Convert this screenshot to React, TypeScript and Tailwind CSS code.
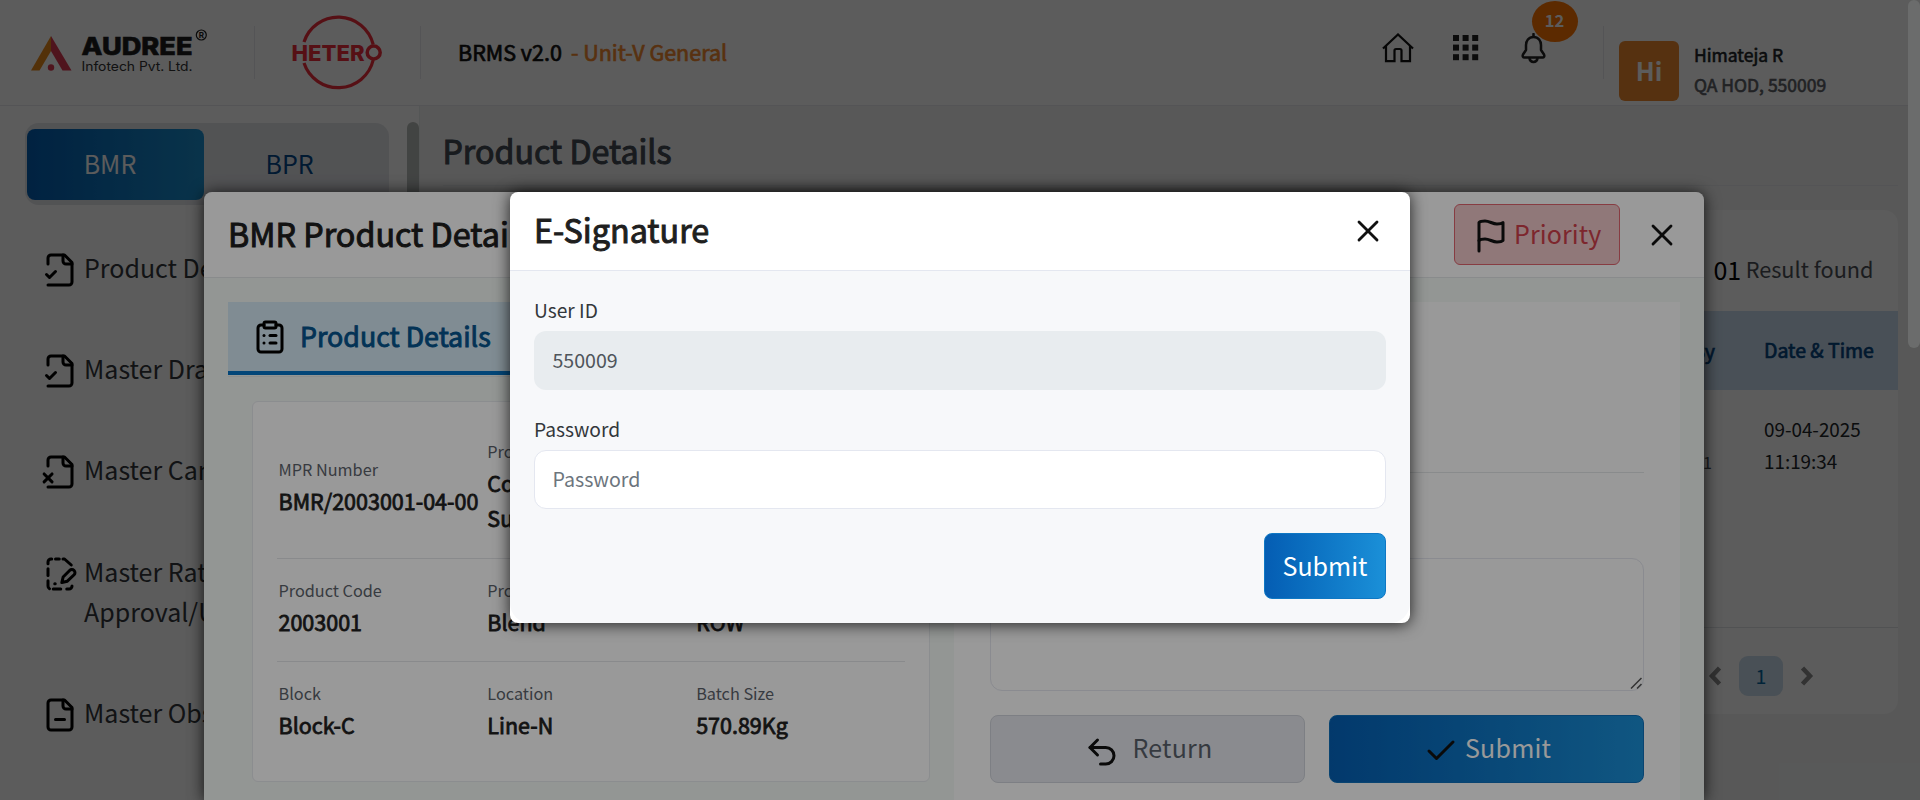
import type { ReactNode } from "react";
import { Check, ClipboardList, Undo2, X } from "lucide-react";

function Glyph({ children, className = "" }: { children: ReactNode; className?: string }) {
  return (
    <svg viewBox="0 0 24 24" fill="none" stroke="currentColor" strokeWidth="2" strokeLinecap="round" strokeLinejoin="round" className={`size-9 shrink-0 overflow-visible ${className}`}>
      {children}
    </svg>
  );
}

const openFile = (
  <>
    <path d="M4 22h14a2 2 0 0 0 2-2V7l-5-5H6a2 2 0 0 0-2 2v4" />
    <path d="M14 2v4a2 2 0 0 0 2 2h4" />
  </>
);

const icons: Record<string, ReactNode> = {
  check: <>{openFile}<path d="m3 15 2 2 4-4" /></>,
  cross: <>{openFile}<path d="m6.700 13.300-5.300 5.300" /><path d="m1.400 13.300 5.300 5.300" /></>,
  edit: (
    <>
      <path d="M4 5.200V4a2 2 0 0 1 2-2h.5" />
      <path d="M9 2h2.500" />
      <path d="M14 2h1l4.500 4" />
      <path d="M4 8.500v4.500" />
      <path d="M4 16.500v3.500a2 2 0 0 0 1 1.800" />
      <path d="M7.500 22h5" />
      <path d="M16.500 22h1.500a2 2 0 0 0 2-2" />
      <path d="M8.500 18.500h.3" />
      <path d="M21.400 9.700a2.100 2.100 0 0 0-3 0l-4.300 4.300-.9 3.700 3.700-.9 4.500-4.300a2 2 0 0 0 0-2.800z" />
    </>
  ),
  minus: (
    <>
      <path d="M15 2H6a2 2 0 0 0-2 2v16a2 2 0 0 0 2 2h12a2 2 0 0 0 2-2V7Z" />
      <path d="M14 2v4a2 2 0 0 0 2 2h4" />
      <path d="M9 15h6" />
    </>
  ),
};

const menu: { icon: string; lines: string[] }[] = [
  { icon: "check", lines: ["Product Details"] },
  { icon: "check", lines: ["Master Drafts"] },
  { icon: "cross", lines: ["Master Cancel"] },
  { icon: "edit", lines: ["Master Ratification", "Approval/Update"] },
  { icon: "minus", lines: ["Master Obsolete"] },
];

function AudreeLogo() {
  return (
    <svg width="180" height="50" viewBox="30 28 180 50" className="shrink-0">
      <path d="M51 36 31 70.500h8.500L51 51z" fill="#e88a1c" />
      <path d="M51 36v15l11.500 19.500H71.500z" fill="#dc3a52" />
      <circle cx="51" cy="67.500" r="3.200" fill="#dc3a52" />
      <text x="81.500" y="55" fontFamily="Inter, sans-serif" fontWeight="800" fontSize="24" textLength="111" lengthAdjust="spacingAndGlyphs" fill="#1d1d1d" stroke="#1d1d1d" strokeWidth=".6">AUDREE</text>
      <text x="81.500" y="70.600" fontFamily="Inter, sans-serif" fontSize="12.800" textLength="111" lengthAdjust="spacingAndGlyphs" fill="#333">Infotech Pvt. Ltd.</text>
      <circle cx="201.300" cy="35" r="5" fill="none" stroke="#1d1d1d" strokeWidth="1.200" />
      <text x="201.300" y="38" textAnchor="middle" fontFamily="Inter, sans-serif" fontWeight="700" fontSize="8" fill="#1d1d1d">R</text>
    </svg>
  );
}

function HeteroLogo() {
  return (
    <svg width="92" height="76" viewBox="291 14.500 92 76" className="shrink-0">
      <path d="M304 42.500A36 36 0 0 1 373.200 45" fill="none" stroke="#f0303c" strokeWidth="3.200" />
      <path d="M304 63.500A36 36 0 0 0 373.200 60.500" fill="none" stroke="#f0303c" strokeWidth="3.200" />
      <text x="291.500" y="61" fontFamily="Inter, sans-serif" fontWeight="800" fontSize="21" textLength="73" lengthAdjust="spacingAndGlyphs" fill="#f0303c">HETER</text>
      <circle cx="373.700" cy="53" r="6.500" fill="none" stroke="#f0303c" strokeWidth="3.500" />
    </svg>
  );
}

function TopBar() {
  return (
    <header className="flex h-[106px] shrink-0 border-b border-[#e9ecef] bg-white pl-[30px]">
      <div className="pt-[28px]"><AudreeLogo /></div>
      <div className="ml-[44px] mt-[26px] h-[53px] w-px bg-[#e9ecef]" />
      <div className="ml-[36px] pt-[14px]"><HeteroLogo /></div>
      <div className="ml-[37px] mt-[26px] h-[53px] w-px bg-[#e9ecef]" />
      <div className="ml-[37px] mt-[32px] flex gap-[9px] whitespace-nowrap text-[21.500px] leading-[40px] [-webkit-text-stroke:0.700px_currentColor]">
        <span className="text-[#111]">BRMS v2.0</span>
        <span className="text-[#f58a2e]">- Unit-V General</span>
      </div>
      <div className="ml-auto flex w-[538px] shrink-0">
        <svg width="32" height="30" viewBox="0 0 32 30" fill="none" stroke="#111" strokeWidth="2.200" className="mt-[33px] shrink-0">
          <path d="M1 15.500 16 1.500l15 14" />
          <path d="M4 13v15.200h8.500V17.500q0-1.500 1.500-1.500h4q1.500 0 1.500 1.500v10.700H28V13" />
        </svg>
        <svg width="26" height="26" viewBox="0 0 26 26" fill="#222" className="ml-[39px] mt-[35px] shrink-0">
          {[0, 9.600, 19.200].map((y) => [0, 9.600, 19.200].map((x) => <rect key={`${x}-${y}`} x={x} y={y} width="6" height="6" />))}
        </svg>
        <div className="relative ml-[41.500px] mt-[33px] h-[32px] w-[25px] shrink-0">
          <svg width="25" height="31" viewBox="0 0 25 31" fill="none" stroke="#222" strokeWidth="2.500" strokeLinecap="round" strokeLinejoin="round">
            <path d="M12.500 1v2.500" />
            <path d="M12.500 4C7.500 4 5 8 5 12v5l-3 4.500c-.8 1.500 0 3 1.500 3h18c1.500 0 2.300-1.500 1.500-3L20 17v-5c0-4-2.500-8-7.500-8z" />
            <path d="M8.500 25.500c.8 4.500 7.200 4.500 8 0" />
          </svg>
          <span className="absolute left-[11px] top-[-32px] flex h-[41px] w-[46px] items-center justify-center rounded-[50%] bg-[#ff7500] pb-[3px] text-[16.500px] font-bold leading-none text-white">12</span>
        </div>
        <div className="ml-[57.500px] mt-[26px] h-[53px] w-px bg-[#e9ecef]" />
        <div className="ml-[15px] mt-[41px] flex h-[60px] w-[60px] shrink-0 items-center justify-center rounded-[6px] bg-[#f0892f] text-[25px] font-bold text-white">Hi</div>
        <div className="ml-[15px] mt-[40px] whitespace-nowrap text-[17.500px] leading-[30.300px] [-webkit-text-stroke:0.600px_currentColor]">
          <div className="text-[#212529]">Himateja R</div>
          <div className="text-[#5c6066]">QA HOD, 550009</div>
        </div>
      </div>
    </header>
  );
}

function SideBar() {
  return (
    <aside className="flex w-[420px] shrink-0 border-r border-[#eceef0] bg-white">
      <div className="flex w-[407px] flex-col pl-[25px] pt-[17px]">
        <div className="flex h-[82px] w-[364px] shrink-0 rounded-[14px] bg-[#e4e6eb] px-[2px] py-[6px] text-[25px]">
          <div className="flex h-[71px] w-[177px] items-center justify-center rounded-[8px] bg-linear-to-r from-[#0560b5] to-[#1b90d0] pb-[1px] pr-[11px] text-white">BMR</div>
          <div className="flex h-[71px] flex-1 items-center pb-[1px] pl-[61.500px] text-[#064a8c]">BPR</div>
        </div>
        <nav className="ml-[17px] mt-[42px] flex flex-col gap-[61.200px]">
          {menu.map((m) => (
            <div key={m.lines[0]} className="flex items-start gap-[6px]">
              <div className="h-[40px] shrink-0 pt-[5px]"><Glyph className="-mb-1 text-black">{icons[m.icon]}</Glyph></div>
              <div className="whitespace-nowrap text-[25px] leading-[40px] text-[#33373b]">
                {m.lines.map((l) => <div key={l}>{l}</div>)}
              </div>
            </div>
          ))}
        </nav>
      </div>
      <div className="mt-[16px] flex-1 rounded-t-[6px] bg-[#babebc]" />
    </aside>
  );
}

function Chevron({ flip }: { flip?: boolean }) {
  return (
    <svg width="14" height="20" viewBox="0 0 14 20" fill="none" stroke="#8d8d8d" strokeWidth="4.500">
      <path d={flip ? "M2.500 2 10 10l-7.500 8" : "M11.500 2 4 10l7.500 8"} />
    </svg>
  );
}

function ProductList() {
  return (
    <main className="flex flex-1 flex-col bg-[#f5f6f6] pl-[22.500px] pr-[22px]">
      <h1 className="flex h-[80px] shrink-0 items-center border-b border-[#e9ecef] pt-[9px] text-[32.200px] text-[#454b55] [-webkit-text-stroke:1px_currentColor]">Product Details</h1>
      <section className="mt-[24px] flex h-[504px] flex-col overflow-hidden rounded-[14px] bg-white">
        <div className="flex h-[101px] items-center justify-end gap-[4.500px] pr-[24.500px] pt-[17px]">
          <span className="text-[25px] leading-[36px] text-black">01</span>
          <span className="text-[21.700px] text-[#4c5157]">Result found</span>
        </div>
        <div className="flex h-[79px] items-center justify-end bg-[#cbe0f2] pr-[25px] text-[19.500px] text-[#064683] [-webkit-text-stroke:0.700px_currentColor]">
          <span className="w-[160px] pr-[49px] text-right">Initiated By</span>
          <span className="w-[109px] whitespace-nowrap pb-[1px]">Date &amp; Time</span>
        </div>
        <div className="flex h-[238px] justify-end border-b border-[#e2e5e8] pr-[25px] pt-[22.500px] text-[18.850px] leading-[32px] text-[#212529]">
          <span className="mt-[33px] pr-[52px] text-[16px] text-[#4c5157]">550001</span>
          <span className="w-[109px]">09-04-2025<br />11:19:34</span>
        </div>
        <div className="ml-auto mr-[84px] mt-[28px] flex items-center gap-[17px]">
          <Chevron />
          <div className="flex h-[40px] w-[44px] items-center justify-center rounded-[9px] bg-[#cbdeee] pb-[1px] text-[19.600px] text-[#06669f]">1</div>
          <Chevron flip />
        </div>
      </section>
    </main>
  );
}

const rows: { label: string; value: string[] }[][] = [
  [
    { label: "MPR Number", value: ["BMR/2003001-04-00"] },
    { label: "Product Name", value: ["Coated", "Sustained"] },
    { label: "Dosage", value: ["Tablet"] },
  ],
  [
    { label: "Product Code", value: ["2003001"] },
    { label: "Product Stage", value: ["Blend"] },
    { label: "Market", value: ["ROW"] },
  ],
  [
    { label: "Block", value: ["Block-C"] },
    { label: "Location", value: ["Line-N"] },
    { label: "Batch Size", value: ["570.89Kg"] },
  ],
];

function DetailsDialog() {
  return (
    <div className="flex w-[1500px] flex-col overflow-hidden rounded-t-[8px] bg-white">
      <div className="flex h-[86px] shrink-0 items-center border-b border-[#e4e8ea] pl-[24px] pr-[24px]">
        <h2 className="flex-1 pb-[2px] text-[32.300px] text-[#1f1f1f] [-webkit-text-stroke:1px_currentColor]">BMR Product Details</h2>
        <div className="flex h-[61px] w-[166px] items-center rounded-[6px] border border-[#e2646f] bg-[#f0c8ca] pl-[17.500px] text-[25px] tracking-[0.100px] text-[#d0404c]">
          <Glyph className="mt-[3px] text-[#111]">
            <path d="M4 15s1-1 4-1 5 2 8 2 4-1 4-1V3s-1 1-4 1-5-2-8-2-4 1-4 1z" />
            <path d="M4 22v-7" />
          </Glyph>
          <span className="ml-[5.500px] pb-[1px]">Priority</span>
        </div>
        <X className="ml-[24px] size-9 text-[#111]" strokeWidth={1.900} />
      </div>
      <div className="flex flex-1 bg-[#f5faf7] pl-[24px] pr-[24px] pt-[24px]">
        <div className="flex w-[726px] flex-col">
          <div className="flex h-[75px] shrink-0 border-b border-[#e8ecec]">
            <div className="flex h-[73px] w-[300px] items-center gap-[12px] border-b-[4px] border-[#0676c8] bg-[#d6e9f5] pl-[24px]">
              <ClipboardList className="size-9 text-black" />
              <span className="pb-[1px] text-[26.800px] text-[#05558f] [-webkit-text-stroke:0.900px_currentColor]">Product Details</span>
            </div>
          </div>
          <div className="ml-[24px] mt-[24px] flex h-[381px] w-[678px] flex-col rounded-[6px] border border-[#e8ebee] bg-white px-[24px] pt-[14px]">
            {rows.map((cells, i) => (
              <div key={i} className={["h-[143px] border-b pb-[1px]", "h-[103px] border-b pb-[4px]", "h-[98px]"][i] + " flex shrink-0 items-center border-[#e4e6ea] pl-[1.500px]"}>
                {cells.map((c) => (
                  <div key={c.label} className="w-[209.700px] whitespace-nowrap">
                    <div className="text-[16.250px] leading-[27px] text-[#5c636b]">{c.label}</div>
                    {c.value.map((v) => (
                      <div key={v} className="text-[21.500px] leading-[35px] text-[#1f1f1f] [-webkit-text-stroke:0.800px_currentColor]">{v}</div>
                    ))}
                  </div>
                ))}
              </div>
            ))}
          </div>
        </div>
        <div className="flex w-[726px] flex-col bg-white px-[36px]">
          <div className="h-[171px] shrink-0 border-b border-[#e4e8ea]" />
          <div className="relative mt-[85px] h-[133px] shrink-0">
            <textarea className="block h-full w-full resize-none rounded-[12px] border border-[#e6e8f0] bg-white" />
            <svg width="12" height="12" viewBox="0 0 12 12" stroke="#555" strokeWidth="1.500" className="absolute bottom-[2px] right-[2px]">
              <path d="M1 11.500 11.500 1M7 11.500l4.500-4.500" />
            </svg>
          </div>
          <div className="mt-[24px] flex gap-[24px] text-[25px] tracking-[0.200px]">
            <div className="flex h-[68px] w-[315px] items-center rounded-[8px] border border-[#d1d4dc] bg-[#e6e8ee] pl-[93px] text-[#5a626c]">
              <Undo2 className="mt-[5px] size-9 text-[#111]" />
              <span className="ml-[12.500px] pb-[3px]">Return</span>
            </div>
            <div className="flex h-[68px] w-[315px] items-center rounded-[8px] border border-[#0f72bd] bg-linear-to-r from-[#0560b5] to-[#1b90d8] pl-[93px] text-white">
              <Check className="mt-[4px] size-9 text-[#111]" />
              <span className="ml-[6px] pb-[3px]">Submit</span>
            </div>
          </div>
        </div>
      </div>
    </div>
  );
}

function SignatureDialog() {
  return (
    <div className="flex h-[431px] w-[900px] flex-col rounded-[8px] bg-white shadow-[0_1px_16px_rgba(0,0,0,0.8)]">
      <div className="flex h-[79px] shrink-0 items-center justify-between border-b border-[#e4e7f0] pl-[24px] pr-[24px]">
        <h2 className="pb-[4px] text-[32.300px] text-[#1f1f1f] [-webkit-text-stroke:1px_currentColor]">E-Signature</h2>
        <X className="size-9 text-[#111]" strokeWidth={1.900} />
      </div>
      <div className="flex flex-1 flex-col rounded-b-[20px] bg-[#f7f8fa] px-[24px] pt-[24px] text-[19.200px] leading-[30px]">
        <label className="text-[#33373b]">User ID</label>
        <div className="mt-[6px] flex h-[59px] shrink-0 items-center rounded-[12px] bg-[#e8ecef] pb-[2px] pl-[18.500px] text-[19.600px] text-[#4f555b]">550009</div>
        <label className="mt-[24px] text-[#33373b]">Password</label>
        <input placeholder="Password" className="mt-[6px] h-[59px] w-full shrink-0 rounded-[12px] border border-[#e4e7f0] bg-white pb-[2px] pl-[17.500px] text-[19.600px] placeholder:text-[#6c757d]" />
        <button className="ml-auto mt-[24px] h-[66px] w-[122px] shrink-0 rounded-[8px] border border-[#0f78c4] bg-linear-to-r from-[#055db3] to-[#1b90d8] pb-[3px] text-[25px] text-white">Submit</button>
      </div>
    </div>
  );
}

export default function App() {
  return (
    <div className="relative h-[800px] w-[1920px] overflow-hidden font-['Noto_Sans_CJK_SC',sans-serif]">
      <div className="flex h-full flex-col">
        <TopBar />
        <div className="flex flex-1 overflow-hidden">
          <SideBar />
          <ProductList />
        </div>
      </div>
      <div className="absolute inset-0 flex items-stretch justify-center overflow-hidden bg-black/40 pr-[12px] pt-[192px]">
        <div className="flex rounded-t-[8px] shadow-[0_1px_16px_rgba(0,0,0,0.8)]">
          <DetailsDialog />
        </div>
        <div className="absolute right-0 top-0 h-[348px] w-[12px] rounded-[6px] bg-[#b2b5b4]" />
      </div>
      <div className="absolute inset-0 flex items-start justify-center bg-black/40 pt-[192px]">
        <SignatureDialog />
      </div>
    </div>
  );
}
